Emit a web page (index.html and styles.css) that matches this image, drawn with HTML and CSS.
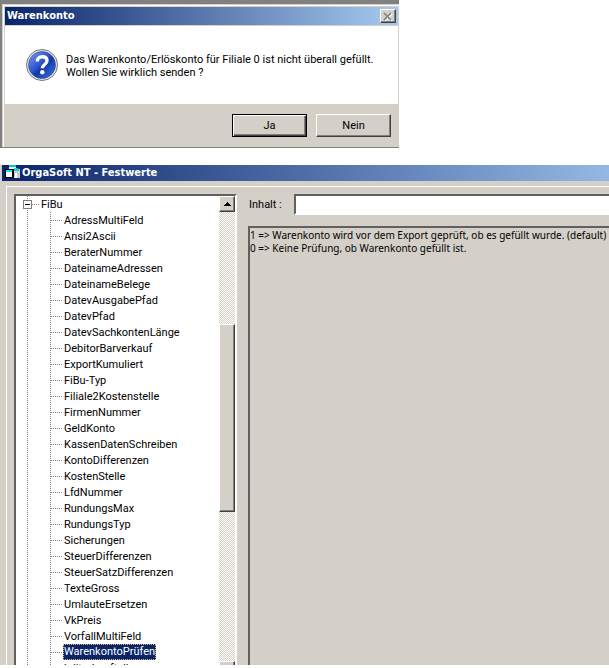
FILE: index.html
```html
<!DOCTYPE html>
<html lang="de">
<head>
    <meta charset="UTF-8">
    <meta name="viewport" content="width=device-width, initial-scale=1.0">
    <title>OrgaSoft NT - Festwerte</title>
    <link rel="stylesheet" href="styles.css">
</head>
<body>

    <div class="backdrop">
        <div class="dialog" role="dialog" aria-labelledby="dialogTitle">
            <div class="titlebar">
                <h2 id="dialogTitle">Warenkonto</h2>
                <button class="close" aria-label="Schließen">
                    <svg width="10" height="9" viewBox="0 0 10 9"><path d="M2 2l7 7M9 2L2 9" stroke="#fff" stroke-width="1.5"/><path d="M1 1l7 7M8 1L1 8" stroke="#808080" stroke-width="1.7"/></svg>
                </button>
            </div>
            <div class="message">
                <svg width="32" height="32" viewBox="0 0 32 32">
                    <defs>
                        <linearGradient id="ball" x1="0" y1="0" x2="1" y2="1">
                            <stop offset="0" stop-color="#7fa0ea"/>
                            <stop offset="0.45" stop-color="#2a55cc"/>
                            <stop offset="0.55" stop-color="#1438a8"/>
                            <stop offset="1" stop-color="#3a78e8"/>
                        </linearGradient>
                    </defs>
                    <circle cx="16" cy="16" r="15.5" fill="#e8e8e8" stroke="#777"/>
                    <circle cx="16" cy="16" r="13.5" fill="url(#ball)" stroke="#1c3c9c" stroke-width="0.6"/>
                    <path d="M11.3 12.6c0-3.4 2-4.9 4.9-4.9 2.8 0 4.8 1.5 4.8 4.1 0 3.8-4.6 3.6-4.6 7.4" fill="none" stroke="#fff" stroke-width="3.4"/>
                    <circle cx="16.3" cy="23.3" r="2.2" fill="#fff"/>
                </svg>
                <p>Das Warenkonto/Erlöskonto für Filiale 0 ist nicht überall gefüllt.<br>Wollen Sie wirklich senden ?</p>
            </div>
            <div class="buttons">
                <button class="btn default"><span>Ja</span></button>
                <button class="btn"><span>Nein</span></button>
            </div>
        </div>
    </div>

    <div class="window">
        <div class="titlebar main">
            <svg width="16" height="16" viewBox="0 0 16 16">
                <path d="M4 0h7v7H4z" fill="#fff"/><path d="M4 0h7v2H4z" fill="#00c8d8"/>
                <path d="M9 3l6 1v9H9z" fill="#ccc"/><path d="M9 3l5 1v2H9z" fill="#00d8e0"/>
                <path d="M0 4h9v9H0z" fill="#000"/><path d="M1 7h6v5H1z" fill="#fff"/><path d="M1 5h6v2H1z" fill="#00e8f0"/>
                <path d="M10 8h2v5h-2z" fill="#fff"/>
            </svg>
            <h1>OrgaSoft NT - Festwerte</h1>
        </div>
        <div class="frame">
            <div class="treebox">
                <ul class="tree">
                    <li>
                        <div class="root"><button class="toggle" aria-label="Zuklappen"></button><span>FiBu</span></div>
                        <ul class="children">
                            <li>AdressMultiFeld</li>
                            <li>Ansi2Ascii</li>
                            <li>BeraterNummer</li>
                            <li>DateinameAdressen</li>
                            <li>DateinameBelege</li>
                            <li>DatevAusgabePfad</li>
                            <li>DatevPfad</li>
                            <li>DatevSachkontenLänge</li>
                            <li>DebitorBarverkauf</li>
                            <li>ExportKumuliert</li>
                            <li>FiBu-Typ</li>
                            <li>Filiale2Kostenstelle</li>
                            <li>FirmenNummer</li>
                            <li>GeldKonto</li>
                            <li>KassenDatenSchreiben</li>
                            <li>KontoDifferenzen</li>
                            <li>KostenStelle</li>
                            <li>LfdNummer</li>
                            <li>RundungsMax</li>
                            <li>RundungsTyp</li>
                            <li>Sicherungen</li>
                            <li>SteuerDifferenzen</li>
                            <li>SteuerSatzDifferenzen</li>
                            <li>TexteGross</li>
                            <li>UmlauteErsetzen</li>
                            <li>VkPreis</li>
                            <li>VorfallMultiFeld</li>
                            <li><span class="selected">WarenkontoPrüfen</span></li>
                            <li>kditorLaufteil</li>
                        </ul>
                    </li>
                </ul>
                <div class="scrollbar">
                    <button class="arrow" aria-label="Nach oben"><svg width="7" height="4" viewBox="0 0 7 4"><path d="M3 0h1v1h1v1h1v1h1v1H0V3h1V2h1V1h1z"/></svg></button>
                    <div class="track before"></div>
                    <div class="thumb"></div>
                    <div class="track after"></div>
                    <button class="arrow" aria-label="Nach unten"><svg width="7" height="4" viewBox="0 0 7 4"><path d="M0 0h7v1H6v1H5v1H4v1H3V3H2V2H1V1H0z"/></svg></button>
                </div>
            </div>
            <div class="detail">
                <div class="field">
                    <label for="inhalt">Inhalt :</label>
                    <input type="text" id="inhalt">
                </div>
                <textarea readonly aria-label="Beschreibung">1 =&gt; Warenkonto wird vor dem Export geprüft, ob es gefüllt wurde. (default)
0 =&gt; Keine Prüfung, ob Warenkonto gefüllt ist.</textarea>
            </div>
        </div>
    </div>

</body>
</html>
```

FILE: styles.css
```css
* { box-sizing: border-box; }
body { margin: 0; height: 100vh; padding-bottom: 3px; display: flex; flex-direction: column; gap: 17px; background: #fff; color: #000; font: 11px/17px Roboto, "Liberation Sans", sans-serif; overflow: hidden; }
h1, h2, p, ul { margin: 0; padding: 0; }
ul { list-style: none; }
svg { display: block; flex: none; }
button { font: inherit; color: inherit; background: #d4d0c8; padding: 0; border: 1px solid; border-color: #fff #404040 #404040 #fff; box-shadow: inset -1px -1px #808080; display: flex; align-items: center; justify-content: center; }

/* message box */
.backdrop { width: 100%; max-width: 399px; background: #808080; padding: 4px 0 0 2px; }
.dialog { background: #d4d0c8; border-bottom: 1px solid #808080; padding: 3px 1px 0 3px; box-shadow: inset 1px 1px #d4d0c8, inset 2px 2px #fff; }
.titlebar { display: flex; align-items: center; height: 18px; padding: 0 2px; background: linear-gradient(to right, #0a246a, #a6caf0); color: #fff; }
.titlebar h1, .titlebar h2 { flex: 1; font: bold 11px/16px "DejaVu Sans Condensed", Tahoma, sans-serif; white-space: nowrap; }
.close { width: 16px; height: 14px; }
.message { display: flex; gap: 8px; margin-top: 1px; padding: 23px 21px; background: #fff; }
.message p { line-height: 13px; padding-top: 4px; white-space: nowrap; }
.buttons { display: flex; justify-content: flex-end; gap: 9px; padding: 10px 7px; }
.btn { width: 75px; height: 23px; }
.btn.default { border-color: #000; box-shadow: inset 1px 1px #fff, inset -1px -1px #404040, inset -2px -2px #808080; }

/* main window */
.window { flex: 1; min-height: 0; display: flex; flex-direction: column; background: #d4d0c8; padding-left: 2px; overflow: hidden; }
.titlebar.main { flex: none; height: 16px; padding: 0 3px; gap: 1px; background: linear-gradient(to right, #0a246a, #94b8e4); }
.frame { flex: 1; min-height: 0; display: flex; gap: 11px; margin: 5px 0 0 4px; padding: 7px 0 0 7px; border-top: 1px solid #fff; border-left: 1px solid #fff; }
.treebox { width: 223px; flex: none; display: flex; overflow: hidden; background: #fff; border: 2px solid; border-color: #606060 #fff #fff #606060; border-bottom: 0; }
.tree { flex: 1; background: repeating-linear-gradient(#808080 0 1px, #fff 1px 2px) 11px 0 / 1px 100% no-repeat; }
.root { display: flex; align-items: center; height: 16px; padding-left: 7px; }
.root span { order: 2; padding-left: 2px; }
.root::after { content: ""; order: 1; width: 7px; border-top: 1px dotted #808080; }
.toggle { width: 9px; height: 9px; border: 1px solid #808080; background: linear-gradient(#000, #000) center / 5px 1px no-repeat #fff; box-shadow: none; }
.children { margin-left: 34px; background: repeating-linear-gradient(#808080 0 1px, #fff 1px 2px) 0 0 / 1px 100% no-repeat; }
.children li { display: flex; align-items: center; height: 16px; gap: 2px; white-space: nowrap; }
.children li::before { content: ""; width: 12px; border-top: 1px dotted #808080; }
.selected { margin-left: -1px; padding: 0 1px; line-height: 16px; background: #0a246a; color: #fff; outline: 1px dotted #e8c060; outline-offset: -1px; }
/* the lower arrow runs past the window's bottom edge */
.scrollbar { width: 16px; margin-bottom: -12px; display: flex; flex-direction: column; }
.arrow { width: 16px; height: 16px; flex: none; }
.track { background: repeating-conic-gradient(#fff 0 25%, #d4d0c8 0 50%) 0 0 / 2px 2px; }
.before { flex: 112; }
.thumb { flex: 187; background: #d4d0c8; border: 1px solid; border-color: #fff #404040 #404040 #fff; box-shadow: inset -1px -1px #808080; }
.after { flex: 150; }
.detail { flex: 1; min-width: 0; display: flex; flex-direction: column; gap: 11px; }
.field { display: flex; align-items: center; }
.field label { width: 46px; padding-left: 1px; flex: none; }
input, textarea { font: inherit; border: 2px solid; border-color: #606060 #fff #fff #606060; border-right: 0; border-radius: 0; margin: 0; outline: 0; }
input { flex: 1; min-width: 0; height: 21px; background: #fff; }
textarea { flex: 1; padding: 1px 0; border-bottom: 0; background: #d4d0c8; font: 10px/13px "Noto Sans", "Liberation Sans", sans-serif; resize: none; white-space: pre; overflow: hidden; }
```
